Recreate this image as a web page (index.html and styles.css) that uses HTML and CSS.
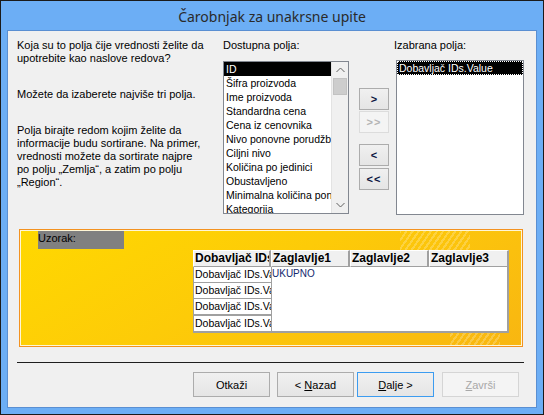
FILE: index.html
```html
<!DOCTYPE html>
<html lang="sr">
<head>
<meta charset="utf-8">
<title>Čarobnjak za unakrsne upite</title>
<link rel="stylesheet" href="styles.css">
</head>
<body>
<div class="window">
  <div class="titlebar">Čarobnjak za unakrsne upite</div>
  <div class="client">
    <div class="top">
      <div class="intro">
        <p>Koja su to polja čije vrednosti želite da<br>upotrebite kao naslove redova?</p>
        <p>Možete da izaberete najviše tri polja.</p>
        <p>Polja birajte redom kojim želite da<br>informacije budu sortirane. Na primer,<br>vrednosti možete da sortirate najpre<br>po polju „Zemlja“, a zatim po polju<br>„Region“.</p>
      </div>
      <div class="avail">
        <div class="label">Dostupna polja:</div>
        <div class="listbox">
          <ul class="items">
            <li class="sel">ID</li>
            <li>Šifra proizvoda</li>
            <li>Ime proizvoda</li>
            <li>Standardna cena</li>
            <li>Cena iz cenovnika</li>
            <li>Nivo ponovne porudžbine</li>
            <li>Ciljni nivo</li>
            <li>Količina po jedinici</li>
            <li>Obustavljeno</li>
            <li>Minimalna količina ponovne porudžbine</li>
            <li>Kategorija</li>
          </ul>
          <div class="scrollbar">
            <div class="sb-arrow">
              <svg width="9" height="6" viewBox="0 0 9 6"><polyline points="0.5,5 4.5,1 8.5,5" fill="none" stroke="#606060" stroke-width="1"/></svg>
            </div>
            <div class="sb-thumb"></div>
            <div class="sb-track"></div>
            <div class="sb-arrow">
              <svg width="9" height="6" viewBox="0 0 9 6"><polyline points="0.5,1 4.5,5 8.5,1" fill="none" stroke="#606060" stroke-width="1"/></svg>
            </div>
          </div>
        </div>
      </div>
      <div class="movers">
        <div class="mbtn"><span>&gt;</span></div>
        <div class="mbtn off"><span>&gt;&gt;</span></div>
        <div class="mbtn gap"><span>&lt;</span></div>
        <div class="mbtn gap2"><span>&lt;&lt;</span></div>
      </div>
      <div class="chosen">
        <div class="label shift">Izabrana polja:</div>
        <div class="listbox tall">
          <ul class="items">
            <li class="sel focus">Dobavljač IDs.Value</li>
          </ul>
        </div>
      </div>
    </div>

    <div class="sample">
      <div class="uzorak">Uzorak:</div>
      <div class="grid">
        <div class="ghead">
          <div class="hcell w1">Dobavljač IDs.Value</div>
          <div class="hcell w2">Zaglavlje1</div>
          <div class="hcell w3">Zaglavlje2</div>
          <div class="hcell w4">Zaglavlje3</div>
        </div>
        <div class="gbody">
          <div class="rowcol">
            <div class="rcell">Dobavljač IDs.Value</div>
            <div class="rcell">Dobavljač IDs.Value</div>
            <div class="rcell r3">Dobavljač IDs.Value</div>
            <div class="rcell r3">Dobavljač IDs.Value</div>
          </div>
          <div class="values">UKUPNO</div>
        </div>
      </div>
    </div>

    <div class="sep"></div>

    <div class="footer">
      <div class="btn"><span>Otkaži</span></div>
      <div class="btn g7"><span>&lt; <u>N</u>azad</span></div>
      <div class="btn g3 default"><span><u>D</u>alje &gt;</span></div>
      <div class="btn g8 disabled"><span><u>Z</u>avrši</span></div>
    </div>
  </div>
</div>
</body>
</html>
```

FILE: styles.css
```css
* { box-sizing: border-box; }

body {
  margin: 0;
  background: #ffffff;
  font-family: "Liberation Sans", Arial, sans-serif;
  font-size: 11px;
  color: #000;
}

.window {
  width: 544px;
  height: 415px;
  border: 1px solid #1a1a1a;
  background: #6caef5;
  padding: 0 6px 6px;
  display: flex;
  flex-direction: column;
}

.titlebar {
  height: 29px;
  display: flex;
  align-items: center;
  justify-content: center;
  font-family: "Noto Sans", "Open Sans", sans-serif;
  font-size: 14px;
  color: #2a2a2a;
  padding-top: 1px;
}

.client {
  flex: 1;
  border: 1px solid #5a8fd2;
  background: #f0f0f0;
  display: flex;
  flex-direction: column;
}

/* top section */
.top {
  display: flex;
  align-items: flex-start;
  height: 184px;
  padding: 8px 0 0 9px;
}

.intro {
  width: 206px;
  line-height: 13px;
  color: #000;
}
.intro p { margin: 0 0 23px; white-space: nowrap; }

.avail { width: 126px; }

.label {
  height: 13px;
  line-height: 13px;
  margin-bottom: 9px;
  white-space: nowrap;
}
.label.shift { margin-left: -2px; margin-bottom: 8px; }

.listbox {
  height: 153px;
  border: 1px solid #828790;
  background: #fff;
  display: flex;
  overflow: hidden;
}
.listbox.tall { height: 155px; }

.items {
  flex: 1;
  min-width: 0;
  list-style: none;
  margin: 0;
  padding: 0;
  overflow: hidden;
  font-size: 10.5px;
}
.items li {
  height: 14px;
  line-height: 14px;
  padding-left: 2px;
  white-space: nowrap;
  overflow: hidden;
}
.items li.sel { background: #000; color: #fff; }
.items li.focus {
  height: 14px;
  line-height: 12px;
  padding-left: 1px;
  border: 1px dotted #fff;
}

.scrollbar {
  width: 17px;
  flex: none;
  display: flex;
  flex-direction: column;
  background: #f0f0f0;
  border-left: 1px solid #e3e3e3;
}
.sb-arrow {
  height: 16px;
  display: flex;
  align-items: center;
  justify-content: center;
  background: #f0f0f0;
}
.sb-thumb {
  height: 17px;
  margin: 0 1px;
  background: #cdcdcd;
  border: 1px solid #c2c2c2;
}
.sb-track { flex: 1; }

/* move buttons */
.movers {
  width: 30px;
  margin: 49px 0 0 10px;
  display: flex;
  flex-direction: column;
}
.mbtn {
  height: 22px;
  border: 1px solid #acacac;
  background: linear-gradient(#f0f0f0, #e5e5e5);
  display: flex;
  align-items: center;
  justify-content: center;
  font-weight: bold;
  font-size: 11px;
  color: #0a1440;
  margin-top: 1px;
}
.mbtn:first-child { margin-top: 0; }
.mbtn.off {
  border-color: #dcdcdc;
  background: #f4f4f4;
  color: #b4b4b4;
  letter-spacing: 1px;
}
.mbtn.gap { margin-top: 11px; }
.mbtn.gap2 { margin-top: 2px; letter-spacing: 1px; }

.chosen { width: 128px; margin-left: 7px; }

/* sample */
.sample {
  margin: 14px 0 0 11px;
  width: 504px;
  height: 118px;
  border: 1px solid #f39220;
  box-shadow: inset 0 0 0 1px #fff6d6;
  padding: 1px 0 0 18px;
  background:
    repeating-linear-gradient(125deg, rgba(255,255,255,0.22) 0 2px, transparent 2px 5px) 380px 0 / 70px 28px no-repeat,
    repeating-linear-gradient(125deg, rgba(255,255,255,0.22) 0 2px, transparent 2px 5px) 430px 96px / 50px 20px no-repeat,
    linear-gradient(150deg, #ffd800 0%, #fdcb08 45%, #fbc00e 75%, #f8b611 100%);
}

.uzorak {
  width: 86px;
  height: 18px;
  background: #808080;
  color: #000;
  line-height: 13px;
  padding-top: 1px;
}

.grid {
  margin: 1px 0 0 155px;
  width: 316px;
}

.ghead { display: flex; height: 17px; }
.hcell {
  height: 17px;
  background: #f0f0f0;
  border-top: 1px solid #fff;
  border-left: 1px solid #fff;
  border-right: 2px solid #a0a0a0;
  border-bottom: 1px solid #a0a0a0;
  font-weight: bold;
  font-size: 12px;
  line-height: 15px;
  padding-left: 1px;
  white-space: nowrap;
  overflow: hidden;
}
.w1 { width: 78px; }
.w2 { width: 79px; }
.w3 { width: 79px; }
.w4 { width: 80px; }

.gbody { display: flex; height: 66px; }
.rowcol { width: 78px; display: flex; flex-direction: column; }
.rcell {
  height: 16px;
  background: #fff;
  border-left: 1px solid #a0a0a0;
  border-bottom: 1px solid #a0a0a0;
  font-size: 10.5px;
  line-height: 15px;
  white-space: nowrap;
  overflow: hidden;
  padding-left: 1px;
}
.rcell.r3 { height: 17px; border-bottom-width: 2px; }
.values {
  flex: 1;
  background: #fff;
  border-right: 2px solid #a0a0a0;
  border-bottom: 2px solid #a0a0a0;
  border-left: 1px solid #a0a0a0;
  color: #13296e;
  font-size: 10px;
  line-height: 14px;
  padding-left: 0;
}

/* separator + footer */
.sep {
  margin: 15px 0 0 9px;
  width: 507px;
  height: 1px;
  background: #1e1e1e;
}

.footer {
  display: flex;
  margin-top: 9px;
  padding-left: 185px;
}
.btn {
  width: 77px;
  height: 25px;
  border: 1px solid #acacac;
  background: linear-gradient(#f0f0f0, #e5e5e5);
  display: flex;
  align-items: center;
  justify-content: center;
  color: #000;
  font-size: 11px;
}
.btn span { white-space: pre; }
.btn.g7 { margin-left: 7px; }
.btn.g3 { margin-left: 3px; }
.btn.g8 { margin-left: 8px; }
.btn.default { border-color: #3c9cf0; }
.btn.disabled {
  border-color: #d5d5d5;
  background: #f4f4f4;
  color: #a8a8a8;
}
```
